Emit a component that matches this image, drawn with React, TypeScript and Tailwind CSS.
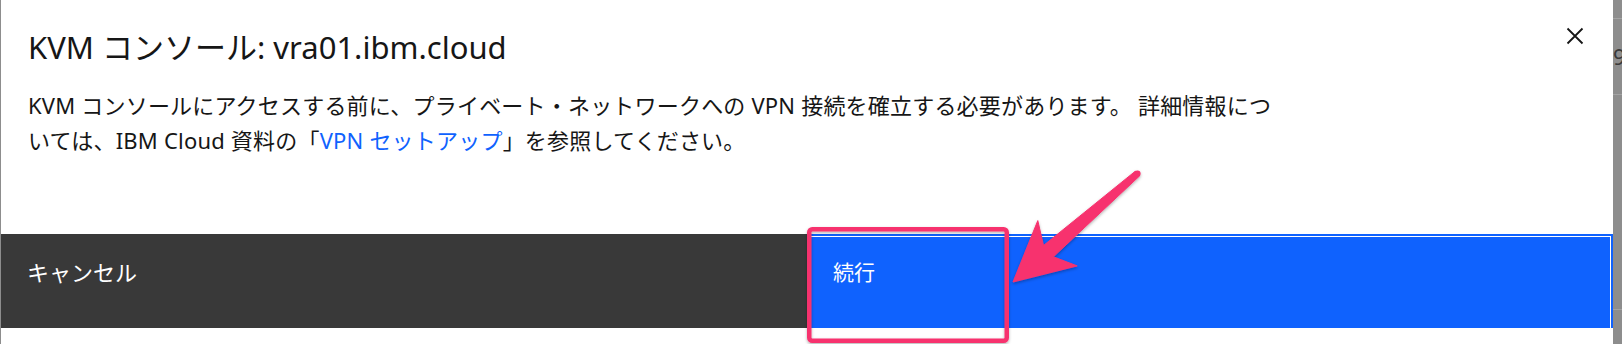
import React from "react";

const FONT = "font-['Noto_Sans','Noto_Sans_CJK_JP',sans-serif]";

function CloseIcon() {
  return (
    <svg width="18" height="18" viewBox="0 0 18 18" fill="none">
      <path d="M1.5 1.5 L16.5 16.5 M16.5 1.5 L1.5 16.5" stroke="#161616" strokeWidth="1.8" strokeLinecap="butt" />
    </svg>
  );
}

function Annotation() {
  const T = [1013, 282];
  const u = [0.754, -0.657];
  const v = [0.657, 0.754];
  const p = (a: number, b: number) => `${(T[0] + a * u[0] + b * v[0]).toFixed(1)},${(T[1] + a * u[1] + b * v[1]).toFixed(1)}`;
  const pts = [p(0, 0), p(59, 30), p(47, 7.5), p(165, 3.2), p(165, -3.2), p(47, -7.5), p(59, -30)].join(" ");
  const tail = [T[0] + 165 * u[0], T[1] + 165 * u[1]];
  return (
    <svg className="absolute inset-0 pointer-events-none" width="1622" height="344" viewBox="0 0 1622 344">
      <defs>
        <filter id="sh" x="-20%" y="-20%" width="140%" height="140%">
          <feDropShadow dx="0" dy="1.5" stdDeviation="1.5" floodColor="#000" floodOpacity="0.3" />
        </filter>
      </defs>
      <rect x="809.25" y="229.25" width="197.5" height="111.5" rx="3" fill="none" stroke="#f7336e" strokeWidth="4.5" filter="url(#sh)" />
      <g filter="url(#sh)">
        <polygon points={pts} fill="#f7336e" strokeLinejoin="round" stroke="#f7336e" strokeWidth="1" />
        <circle cx={tail[0]} cy={tail[1]} r="3.2" fill="#f7336e" />
      </g>
    </svg>
  );
}

export default function App() {
  return (
    <div className={`relative w-[1622px] h-[344px] bg-white flex overflow-hidden ${FONT}`}>
      <div className="flex-1 flex flex-col border-l border-[#8d8d8d] bg-white">
        <div className="flex justify-between pl-[27px] pr-[29px] pt-[27px]">
          <h2 className="text-[31px] leading-[40px] text-[#161616]">KVM コンソール: vra01.ibm.cloud</h2>
          <div>
            <CloseIcon />
          </div>
        </div>
        <p className="pl-[27px] mt-[21px] text-[22px] leading-[35px] text-[#161616] tracking-[0.2px]">
          KVM コンソールにアクセスする前に、プライベート・ネットワークへの VPN 接続を確立する必要があります。 詳細情報につ
          <br />
          いては、IBM Cloud 資料の「<span className="text-[#0f62fe]">VPN セットアップ</span>」を参照してください。
        </p>
        <div className="mt-auto mb-[16px] h-[94px] flex overflow-hidden">
          <div className="flex-1 bg-[#393939] text-white text-[22px] leading-[30px] pl-[26px] pt-[23px]">キャンセル</div>
          <div className="flex-1 h-[100px] bg-[#0f62fe] text-white text-[21px] leading-[30px] pl-[26px] pt-[23px] shadow-[inset_0_0_0_2px_#0f62fe,inset_0_0_0_3px_#ffffff]">
            続行
          </div>
        </div>
      </div>
      <div className="w-[9px] bg-[#8d8d8d] flex flex-col">
        <div className="h-[18px]" />
        <div className="h-[1px] bg-[#a3a3a3]" />
        <div className="h-[75px] pt-[26px] text-[22px] leading-[22px] text-[#3a3a3a] whitespace-nowrap">9</div>
        <div className="h-[1px] bg-[#a3a3a3]" />
        <div className="h-[214px]" />
        <div className="h-[1px] bg-[#a3a3a3]" />
      </div>
      <Annotation />
    </div>
  );
}
